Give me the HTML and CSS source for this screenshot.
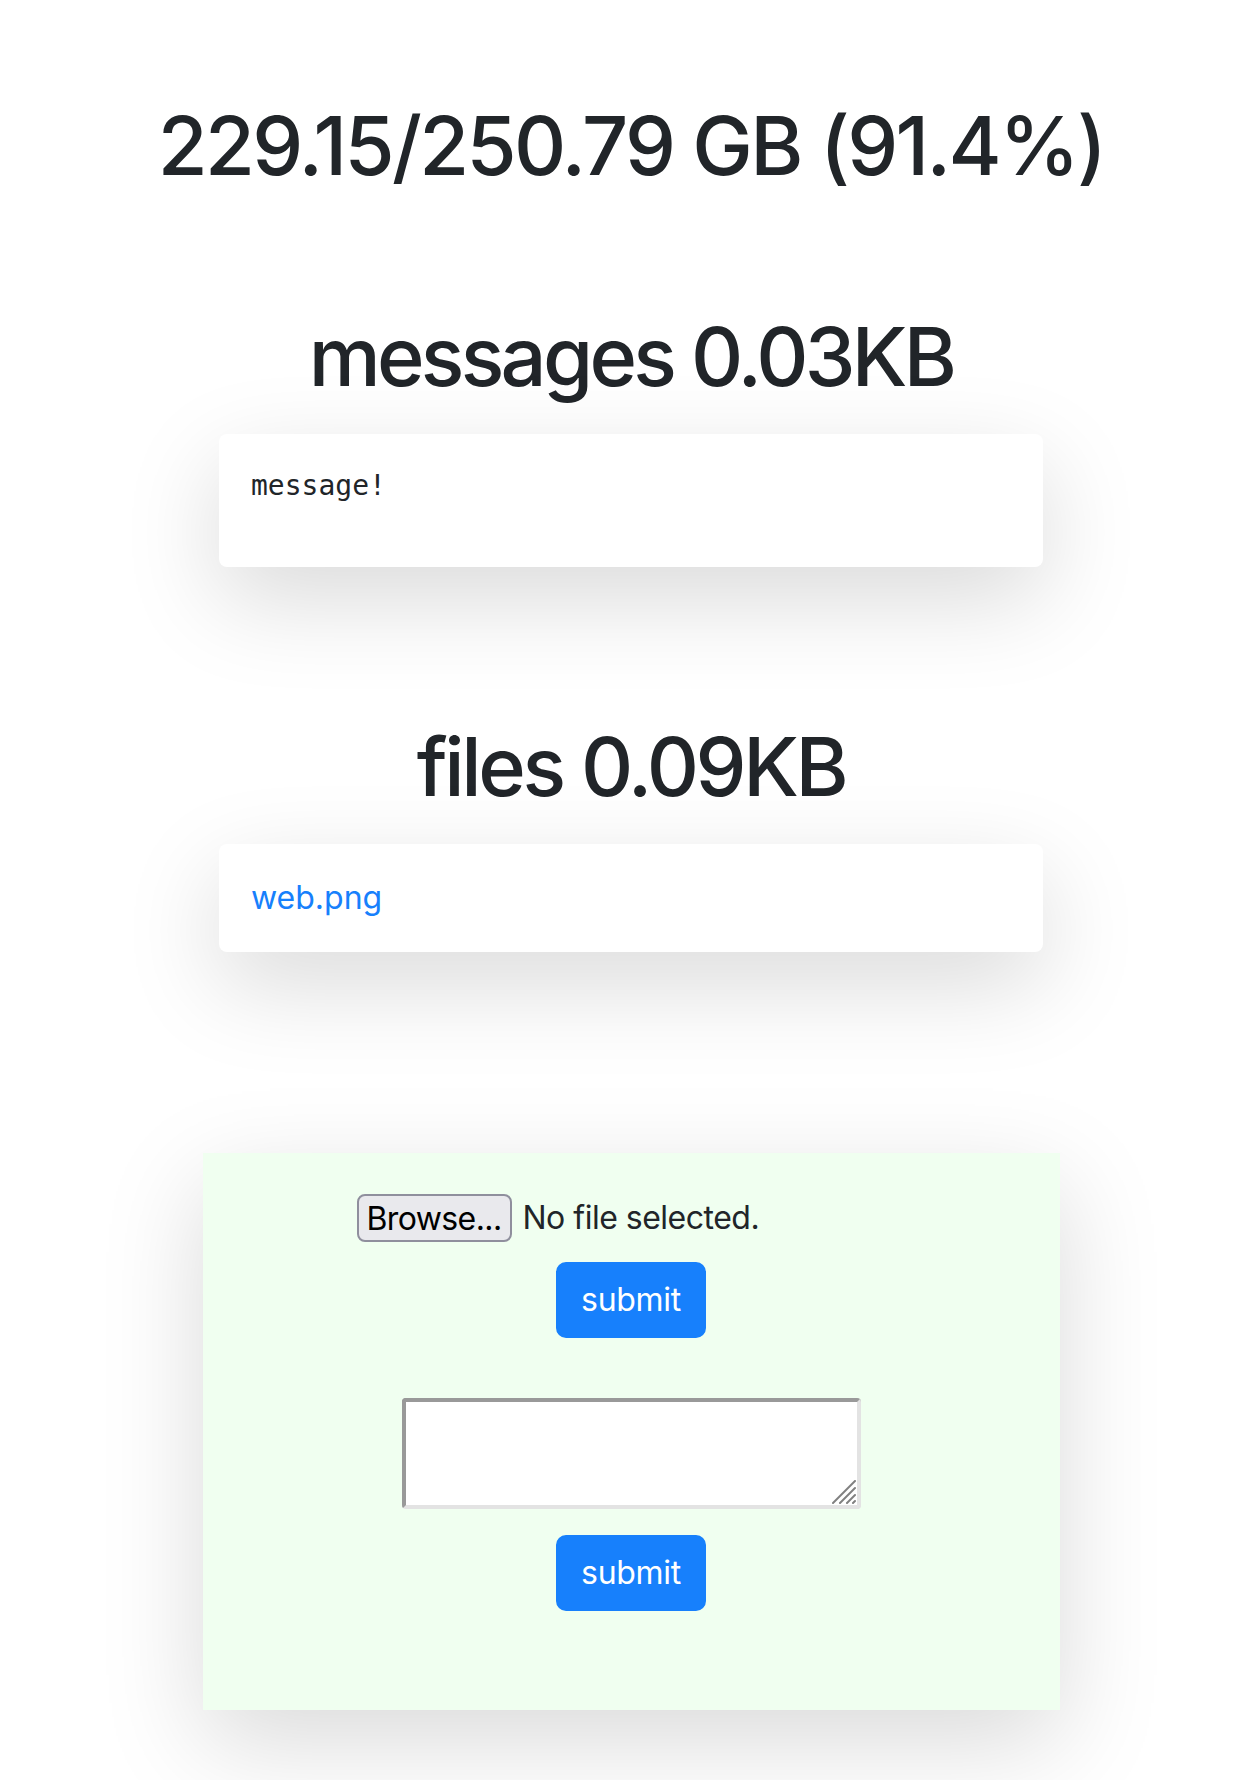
FILE: index.html
```html
<!DOCTYPE html>
<html lang="en">
<head>
<meta charset="utf-8">
<title>Storage</title>
<link rel="stylesheet" href="styles.css">
</head>
<body>
<main class="page">
  <h1 class="display usage">229.15/250.79 GB (91.4%)</h1>

  <section class="block block-messages">
    <h2 class="display block-title">messages 0.03KB</h2>
    <div class="card card-messages">
      <pre class="msg">message!</pre>
    </div>
  </section>

  <section class="block block-files">
    <h2 class="display block-title">files 0.09KB</h2>
    <div class="card card-files">
      <a class="file-link" href="#">web.png</a>
    </div>
  </section>

  <div class="upload">
    <form class="upload-form">
      <div class="file-row">
        <button type="button" class="browse">Browse...</button>
        <span class="file-status">No file selected.</span>
      </div>
      <button type="button" class="btn-submit btn-first">submit</button>
    </form>
    <form class="upload-form">
      <span class="note-wrap">
        <textarea class="note"></textarea>
        <svg class="grip" width="24" height="24" viewBox="0 0 24 24" aria-hidden="true">
          <g stroke="#808080" stroke-width="2" stroke-linecap="round">
            <line x1="1" y1="23" x2="23" y2="1"/>
            <line x1="8" y1="23" x2="23" y2="8"/>
            <line x1="15" y1="23" x2="23" y2="15"/>
            <line x1="21" y1="23" x2="23" y2="21"/>
          </g>
        </svg>
      </span>
      <button type="button" class="btn-submit btn-second">submit</button>
    </form>
  </div>
</main>
</body>
</html>
```

FILE: styles.css
```css
* {
  box-sizing: border-box;
}

html, body {
  margin: 0;
  padding: 0;
  background: #ffffff;
}

body {
  font-family: Inter, "Noto Sans", "Liberation Sans", sans-serif;
  color: #212529;
  font-size: 32px;
}

.page {
  padding: 98px 0 70px 6px;
  display: flex;
  flex-direction: column;
  align-items: center;
}

.display {
  font-family: Inter, "Noto Sans", "Liberation Sans", sans-serif;
  font-weight: 500;
  font-size: 81px;
  line-height: 97px;
  margin: 0;
  color: #212529;
  text-align: center;
  letter-spacing: -3.4px;
}

.usage {
  letter-spacing: -2.6px;
}

.block {
  display: flex;
  flex-direction: column;
  align-items: center;
}

.block-messages {
  margin-top: 114px;
}

.block-messages .block-title {
  letter-spacing: -3.7px;
}

.block-files {
  margin-top: 152px;
}

.block-title {
  margin-bottom: 28px;
}

.card {
  width: 824px;
  background: #ffffff;
  border-radius: 8px;
  padding: 32px;
  box-shadow: 0 32px 96px rgba(0, 0, 0, 0.15);
}

.msg {
  margin: 0 0 29px 0;
  font-family: "DejaVu Sans Mono", "Liberation Mono", monospace;
  font-size: 28px;
  line-height: 40px;
  color: #212529;
}

.file-link {
  display: block;
  font-size: 32px;
  line-height: 44px;
  color: #1780fc;
  text-decoration: none;
}

.upload {
  margin-top: 201px;
  width: 857px;
  background: #f0fff0;
  box-shadow: 0 32px 96px rgba(0, 0, 0, 0.15);
  padding: 41px 0 99px 0;
  display: flex;
  flex-direction: column;
  align-items: center;
}

.upload-form {
  display: flex;
  flex-direction: column;
  align-items: center;
  margin: 0;
}

.file-row {
  width: 549px;
  height: 48px;
  display: flex;
  align-items: center;
}

.browse {
  width: 155px;
  height: 48px;
  padding: 0;
  margin: 0;
  background: #e9e9ed;
  border: 2px solid #8f8f9d;
  border-radius: 8px;
  font-family: Inter, "Noto Sans", "Liberation Sans", sans-serif;
  font-size: 32px;
  color: #000000;
  letter-spacing: -0.6px;
  text-align: center;
}

.file-status {
  margin-left: 11px;
  font-size: 32px;
  line-height: 48px;
  color: #212529;
  letter-spacing: -0.5px;
}

.btn-submit {
  width: 150px;
  height: 76px;
  padding: 0;
  background: #1780fc;
  border: 2px solid #1780fc;
  border-radius: 10px;
  color: #ffffff;
  font-family: Inter, "Noto Sans", "Liberation Sans", sans-serif;
  font-size: 32px;
  line-height: 48px;
  text-align: center;
  letter-spacing: -0.3px;
}

.btn-first {
  margin-top: 20px;
}

.upload-form + .upload-form {
  margin-top: 60px;
}

.note-wrap {
  position: relative;
  display: block;
  width: 459px;
  height: 111px;
}

.note {
  display: block;
  width: 459px;
  height: 111px;
  margin: 0;
  padding: 4px;
  background: #ffffff;
  border-style: solid;
  border-width: 4px;
  border-color: #999999 #e3e3e3 #e3e3e3 #999999;
  border-radius: 4px;
  resize: none;
  font-size: 28px;
}

.grip {
  position: absolute;
  right: 5px;
  bottom: 5px;
}

.btn-second {
  margin-top: 26px;
}
```
